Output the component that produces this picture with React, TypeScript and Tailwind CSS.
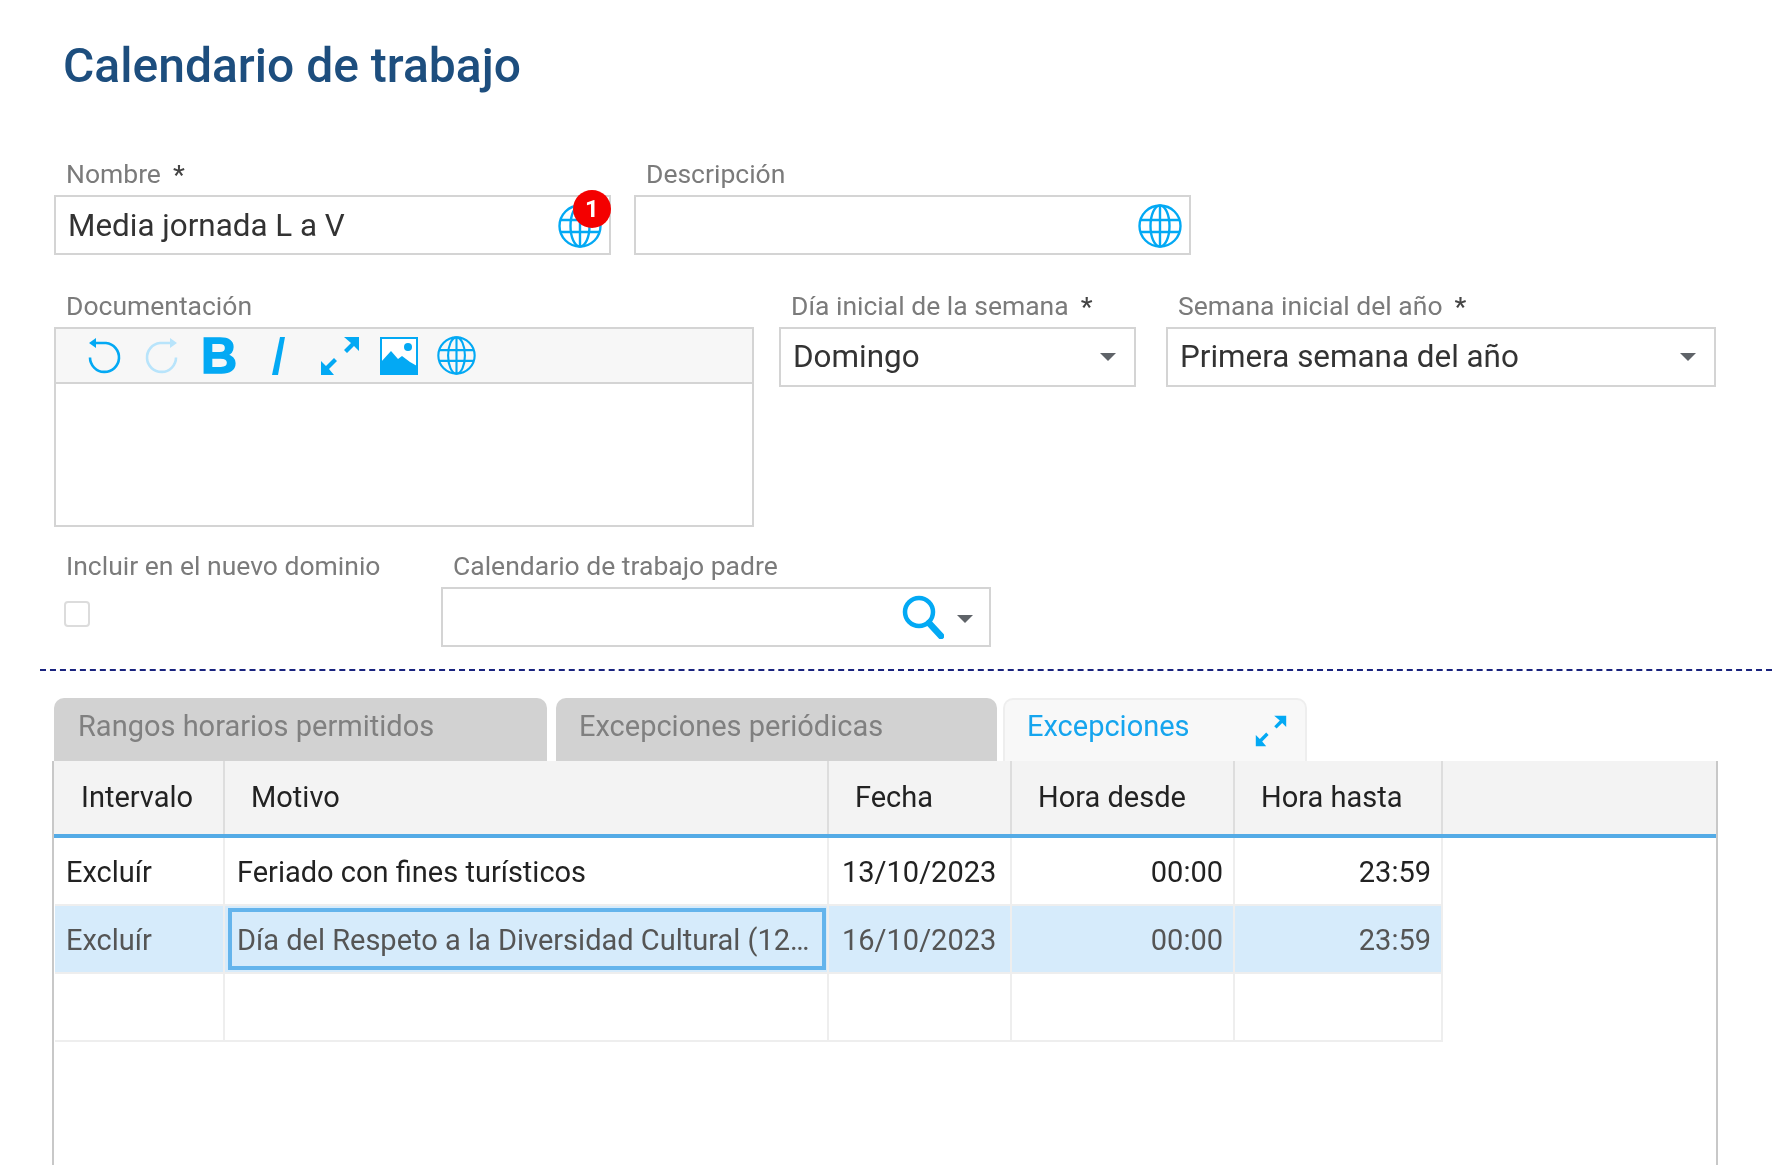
const Globe = ({ className }: { className: string }) => (
  <svg viewBox="0 0 44 44" fill="none" stroke="#03a9f4" strokeWidth="2.4" className={className}>
    <circle cx="22" cy="22" r="20.5" />
    <ellipse cx="22" cy="22" rx="9.5" ry="20.5" />
    <path d="M22 2v40M3 16h38M3 28h38" />
  </svg>
);

const Caret = ({ className = "" }: { className?: string }) => (
  <div className={`h-0 w-0 border-x-[8px] border-t-[8px] border-x-transparent border-t-[#5f6368] ${className}`} />
);

const Expand = ({ className }: { className: string }) => (
  <svg viewBox="0 0 40 40" fill="#03a9f4" className={className}>
    <path d="M24 1h15v14l-5-5-7 7-3-3 7-7zM1 39V25l5 5 8-8 3 3-8 8 5 6z" />
  </svg>
);

const Label = ({ text, required }: { text: string; required?: boolean }) => (
  <div className="h-[39px] whitespace-nowrap pl-[12px] text-[26.5px] leading-[36px] text-[#7b7b7b]">
    {text}
    {required && <span className="ml-[12px] font-medium text-[#444]">*</span>}
  </div>
);

const rows = [
  { intervalo: "Excluír", motivo: "Feriado con fines turísticos", fecha: "13/10/2023", desde: "00:00", hasta: "23:59" },
  { intervalo: "Excluír", motivo: "Día del Respeto a la Diversidad Cultural (12 de octubre)", fecha: "16/10/2023", desde: "00:00", hasta: "23:59", selected: true },
  { intervalo: "", motivo: "", fecha: "", desde: "", hasta: "" },
];

const gridCols = "grid grid-cols-[170px_604px_183px_223px_208px]";

export default function App() {
  return (
    <div className="h-[1165px] overflow-hidden bg-white font-['Roboto',sans-serif] blur-[0.6px]">
      <h1 className="pl-[63px] pt-[38px] text-[48px] font-medium leading-[56px] text-[#1d4e7e]">
        Calendario de trabajo
      </h1>

      {/* Nombre / Descripcion */}
      <div className="ml-[54px] mt-[62px] flex gap-[23px]">
        <div className="w-[557px]">
          <Label text="Nombre" required />
          <div className="relative flex h-[60px] items-center justify-between border-2 border-[#d4d4d4] pl-[12px] pr-[7px] pt-[2px] text-[31.4px] text-[#333]">
            Media jornada L a V
            <Globe className="h-[44px] w-[44px]" />
            <div className="absolute right-[-2px] top-[-7px] flex h-[38px] w-[38px] items-center justify-center rounded-full bg-[#f40000] text-[24px] font-bold text-white">
              1
            </div>
          </div>
        </div>
        <div className="w-[557px]">
          <Label text="Descripción" />
          <div className="flex h-[60px] items-center justify-end border-2 border-[#d4d4d4] pr-[7px] pt-[2px]">
            <Globe className="h-[44px] w-[44px]" />
          </div>
        </div>
      </div>

      {/* Documentacion + selects */}
      <div className="ml-[54px] mt-[33px] flex items-start">
        <div className="w-[700px]">
          <Label text="Documentación" />
          <div className="h-[200px] border-2 border-[#d4d4d4]">
            <div className="flex h-[55px] items-center border-b-2 border-[#d4d4d4] bg-[#f7f7f7] pl-[30px]">
              <svg viewBox="0 0 36 38" fill="none" stroke="#03a9f4" strokeWidth="2.6" className="h-[38px] w-[36px]">
                <path d="M8 6h12a14.5 14.5 0 1 1-16 14.5" />
                <path d="M10 1v10L3 6z" fill="#03a9f4" stroke="none" />
              </svg>
              <svg viewBox="0 0 36 38" fill="none" stroke="#b8e4fb" strokeWidth="2.6" className="ml-[22px] h-[38px] w-[36px]">
                <path d="M28 6H16a14.5 14.5 0 1 0 16 14.5" />
                <path d="M26 1v10l7-5z" fill="#b8e4fb" stroke="none" />
              </svg>
              <span className="ml-[21px] w-[36px] font-['Liberation_Sans',sans-serif] text-[50px] font-bold leading-[50px] text-[#03a9f4] [-webkit-text-stroke:1.5px_#03a9f4]">
                B
              </span>
              <svg viewBox="0 0 20 38" fill="#03a9f4" className="ml-[31px] h-[38px] w-[20px]">
                <path d="M12 0h5l-7 38H4z" />
              </svg>
              <Expand className="ml-[32px] h-[40px] w-[40px]" />
              <svg viewBox="0 0 38 38" className="ml-[20px] h-[38px] w-[38px]">
                <path d="M1 1h36v36H1z" fill="#fff" stroke="#03a9f4" strokeWidth="2" />
                <circle cx="28" cy="10" r="4" fill="#03a9f4" />
                <path d="M1 37V25l10-11 7 8 4-3 8 6 7 4v8z" fill="#03a9f4" />
              </svg>
              <Globe className="ml-[19px] h-[39px] w-[39px]" />
            </div>
          </div>
        </div>
        <div className="ml-[25px] w-[357px]">
          <Label text="Día inicial de la semana" required />
          <div className="flex h-[60px] items-center justify-between border-2 border-[#d4d4d4] pl-[12px] pr-[18px] text-[31.4px] text-[#333]">
            Domingo
            <Caret />
          </div>
        </div>
        <div className="ml-[30px] w-[550px]">
          <Label text="Semana inicial del año" required />
          <div className="flex h-[60px] items-center justify-between border-2 border-[#d4d4d4] pl-[12px] pr-[18px] text-[31.4px] text-[#333]">
            Primera semana del año
            <Caret />
          </div>
        </div>
      </div>

      {/* Incluir / padre */}
      <div className="ml-[54px] mt-[21px] flex items-start">
        <div className="w-[387px]">
          <Label text="Incluir en el nuevo dominio" />
          <div className="ml-[10px] mt-[14px] h-[26px] w-[26px] rounded-[4px] border-2 border-[#dcdcdc] bg-white" />
        </div>
        <div className="w-[550px]">
          <Label text="Calendario de trabajo padre" />
          <div className="flex h-[60px] items-center justify-end border-2 border-[#d4d4d4] pr-[16px]">
            <svg viewBox="0 0 42 44" fill="none" stroke="#03a9f4" className="h-[44px] w-[42px]">
              <circle cx="17" cy="17" r="14" strokeWidth="4.5" />
              <path d="M27 28l12 13" strokeWidth="6.5" strokeLinecap="round" />
            </svg>
            <Caret className="ml-[13px] mt-[3px]" />
          </div>
        </div>
      </div>

      <div className="ml-[40px] mt-[22px] border-t-2 border-dashed border-[#1a237e]" />

      {/* Tabs */}
      <div className="ml-[54px] mt-[27px] flex h-[63px]">
        <div className="w-[493px] rounded-t-[10px] bg-[#d2d2d2] pl-[24px] pt-[10px] text-[29px] leading-[36px] text-[#808080]">
          Rangos horarios permitidos
        </div>
        <div className="ml-[9px] w-[441px] rounded-t-[10px] bg-[#d2d2d2] pl-[23px] pt-[10px] text-[29px] leading-[36px] text-[#808080]">
          Excepciones periódicas
        </div>
        <div className="ml-[6px] flex w-[304px] justify-between rounded-t-[10px] border-x-2 border-t-2 border-[#eeeeee] bg-[#f8f8f8] pl-[22px] pr-[18px] pt-[8px] text-[29px] leading-[36px] text-[#16a5ee]">
          Excepciones
          <Expand className="mt-[7px] h-[32px] w-[32px]" />
        </div>
      </div>

      {/* Grid */}
      <div className="ml-[52px] mr-[54px] h-[420px] border-x-2 border-[#c8c8c8]">
        <div className="h-[77px] border-b-[4px] border-[#54abe6] bg-[#f3f3f3]">
          <div className={`${gridCols} ml-[1px] h-full text-[29px] text-[#222]`}>
            {["Intervalo", "Motivo", "Fecha", "Hora desde", "Hora hasta"].map((h) => (
              <div key={h} className="flex items-center border-r-2 border-[#dddddd] pl-[26px]">
                {h}
              </div>
            ))}
          </div>
        </div>
        {rows.map((r, i) => (
          <div
            key={i}
            className={`${gridCols} ml-[1px] h-[68px] w-[1388px] border-b-2 border-[#eeeeee] text-[29px] ${r.selected ? "bg-[#d6ebfb] text-[#555]" : "text-[#222]"}`}
          >
            <div className="flex items-center border-r-2 border-[#eeeeee] pl-[11px] pt-[3px]">{r.intervalo}</div>
            <div className="flex items-center border-r-2 border-[#eeeeee] pl-[3px] pr-[1px]">
              <div
                className={`flex h-[62px] w-full min-w-0 items-center border-[4px] pl-[5px] pr-[10px] pt-[3px] ${r.selected ? "border-[#64b4ec]" : "border-transparent"}`}
              >
                <span className="truncate">{r.motivo}</span>
              </div>
            </div>
            <div className="flex items-center border-r-2 border-[#eeeeee] pl-[13px] pt-[3px]">{r.fecha}</div>
            <div className="flex items-center justify-end border-r-2 border-[#eeeeee] pr-[10px] pt-[3px]">{r.desde}</div>
            <div className="flex items-center justify-end border-r-2 border-[#eeeeee] pr-[10px] pt-[3px]">{r.hasta}</div>
          </div>
        ))}
      </div>
    </div>
  );
}
